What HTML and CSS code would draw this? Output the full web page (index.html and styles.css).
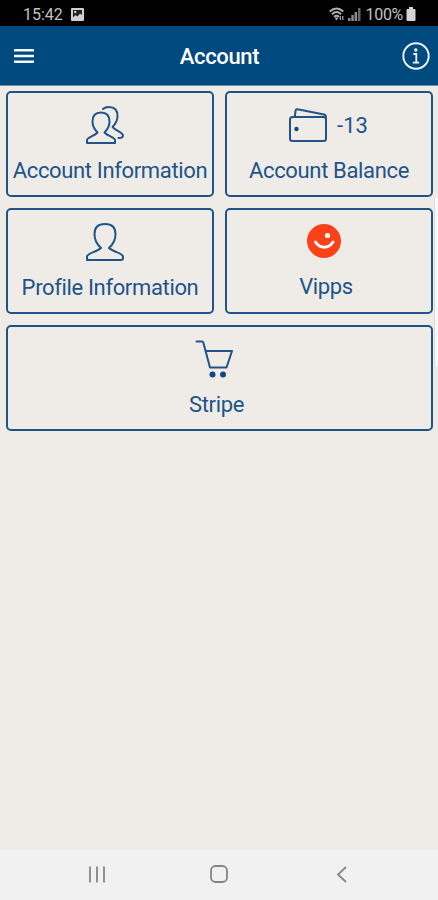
FILE: index.html
```html
<!DOCTYPE html>
<html lang="en">
<head>
<meta charset="utf-8">
<title>Account</title>
<link rel="stylesheet" href="styles.css">
</head>
<body>
<div class="phone">
  <div class="status">
    <span class="time">15:42</span>
    <svg class="photo" width="13" height="13" viewBox="0 0 13 13"><rect width="13" height="13" rx="1" fill="#d0d0d0"/><path d="M2 2h9v5L9 5.500 6.500 8.500 4.500 7 2 9.500z" fill="#222"/><circle cx="4.200" cy="4" r="1.200" fill="#d0d0d0"/></svg>
    <svg class="wifi" width="16" height="15" viewBox="0 0 16 15" fill="none" stroke="#b0b0b0" stroke-width="1.900"><path d="M.7 4.500Q7.500-1.500 14.300 4.500M2.900 7.200Q7.500 3 12.100 7.200M5 9.700Q7.500 7.600 10 9.700"/><path d="M7.500 13.500l-2-3h4z" fill="#b0b0b0" stroke="none"/><path d="M11.300 9v4M13.800 9v4" stroke-width="1.200"/></svg>
    <svg class="signal" width="13" height="13" viewBox="0 0 13 13" fill="#8c8c8c"><path d="M0 10h2.500v3H0zM3.300 7h2.500v6H3.300zM6.600 4h2.500v9H6.600z"/><path d="M10 0h2.500v13H10z" fill="#666"/></svg>
    <span class="percent">100%</span>
    <svg class="battery" width="10" height="14" viewBox="0 0 10 14" fill="#d4d4d4"><path d="M3 0h4v2h1.500q1 0 1 1v10q0 1-1 1h-7q-1 0-1-1V3q0-1 1-1H3z"/></svg>
  </div>
  <header class="bar">
    <svg width="20" height="14" viewBox="0 0 20 14" fill="#f2f6fa"><path d="M0 0h20v2.600H0zM0 5.700h20v2.600H0zM0 11.400h20V14H0z"/></svg>
    <h1 class="title">Account</h1>
    <svg width="28" height="28" viewBox="0 0 28 28" fill="none" stroke="#eef5fb"><circle cx="14" cy="14" r="12.700" stroke-width="1.900"/><circle cx="13.800" cy="8" r="1.700" fill="#eef5fb" stroke="none"/><path d="M11.300 12h3v8.500M10.800 20.700h6.400" stroke-width="1.800"/></svg>
  </header>
  <main class="tiles">
    <section class="tile">
      <div class="icon shifted"><svg width="38" height="38" viewBox="0 0 38 38"><path d="M1 37v-3c0-2.500 7.500-4 10.500-7.500C8.500 23.500 6.500 20 6.500 15.500 6.500 10 9.500 6.500 15 6.500s8.500 3.500 8.500 9c0 4.500-2 8-5 11 3 3.500 10.500 5 10.500 7.500v3z"/><path d="M17 3C18.500 1.500 20.500 1 23 1c5.500 0 8.500 3.500 8.500 9 0 4.500-2 8-5 11 2.500 3.500 10.500 5 10.500 8.500 0 2-1.500 2.500-4.500 2.500"/></svg></div>
      <span class="label">Account Information</span>
    </section>
    <section class="tile">
      <div class="icon balance"><svg width="38" height="34" viewBox="0 0 38 34"><rect x="1" y="9" width="36" height="24" rx="2.500"/><path d="M5.800 8.500l.8-6c.2-1 .8-1.500 1.900-1.300L35 6.500c1.500.4 2 1 2 3"/><circle class="solid" cx="7.500" cy="21" r="2.200"/></svg><span class="amount">-13</span></div>
      <span class="label">Account Balance</span>
    </section>
    <section class="tile">
      <div class="icon shifted"><svg width="38" height="38" viewBox="0 0 38 38"><path d="M1 37v-3.500c0-3.500 10-4.500 14-8.500C11 21.500 8.500 17.500 8.500 11 8.500 4.500 12.500 1 19 1s10.500 3.500 10.500 10c0 6.500-2.500 10.500-6.500 14C27 29 37 30 37 33.500V35q0 2-2 2z"/></svg></div>
      <span class="label">Profile Information</span>
    </section>
    <section class="tile vipps">
      <div class="icon shifted"><svg width="34" height="34" viewBox="0 0 34 34"><circle class="face" cx="17" cy="17" r="17"/><path class="smile" d="M8.500 18c4.500 7 13 7 17.500 0"/><circle class="eye" cx="20.500" cy="11.500" r="2.600"/></svg></div>
      <span class="label short">Vipps</span>
    </section>
    <section class="tile wide">
      <div class="icon shifted"><svg width="38" height="38" viewBox="0 0 38 38"><path d="M1.500 1.500H7q1 0 1.300 1l6.700 25h16.500L37 11H10.500"/><circle class="solid" cx="17.500" cy="34.500" r="3"/><circle class="solid" cx="28" cy="34.500" r="3"/></svg></div>
      <span class="label short">Stripe</span>
    </section>
  </main>
  <div class="edge"></div>
  <nav class="nav">
    <svg width="16" height="17" viewBox="0 0 16 17"><path d="M1 .5v16M8 .5v16M15 .5v16"/></svg>
    <svg class="home" width="18" height="18" viewBox="0 0 18 18"><rect x="1" y="1" width="16" height="16" rx="4.500"/></svg>
    <svg width="11" height="17" viewBox="0 0 11 17"><path d="M10 1L2 8.500 10 16"/></svg>
  </nav>
</div>
</body>
</html>
```

FILE: styles.css
```css
* { box-sizing: border-box; }
body { margin: 0; font-family: Roboto, sans-serif; }
svg { display: block; flex: none; }
.phone {
  position: relative;
  display: flex;
  flex-direction: column;
  width: 438px;
  height: 900px;
  background: #efece7;
  overflow: hidden;
}
.status {
  display: flex;
  align-items: center;
  height: 26px;
  padding: 2px 22px 0 23px;
  background: #000;
  color: #c2c2c2;
  font-size: 16px;
}
.photo { margin-left: 8px; }
.wifi { margin-left: auto; margin-right: 3px; }
.percent { margin: 0 3px 0 4px; letter-spacing: -0.3px; }
.wifi, .signal { position: relative; left: -1px; }
.bar {
  display: flex;
  align-items: center;
  justify-content: space-between;
  height: 60px;
  padding: 0 8px 0 14px;
  background: #004a80;
  border-bottom: 1px solid #668fae;
  color: #fff;
}
.title {
  margin: 3px 0 0 3px;
  font-size: 22px;
  font-weight: 500;
  line-height: 26px;
  letter-spacing: -0.35px;
}
.tiles {
  flex: 1;
  display: grid;
  grid-template-columns: 208px 208px;
  grid-auto-rows: 106px;
  align-content: start;
  gap: 11px;
  padding: 5px 5px 0 6px;
}
.tile {
  display: flex;
  flex-direction: column;
  align-items: center;
  padding-top: 12px;
  border: 2px solid #205489;
  border-radius: 5px;
  color: #205489;
}
.wide { grid-column: span 2; }
.icon {
  display: flex;
  align-items: center;
  height: 39px;
}
.shifted { padding-right: 11px; }
.balance { padding-right: 1px; }
.icon svg {
  fill: none;
  stroke: #205489;
  stroke-width: 2;
  stroke-linejoin: round;
  stroke-linecap: round;
}
.icon .solid { fill: #104a82; stroke: none; }
.icon .face { fill: #fc4118; stroke: none; }
.icon .smile { stroke: #fff; stroke-width: 3; }
.icon .eye { fill: #fff; stroke: none; }
.amount { margin: 2px 0 0 10px; font-size: 22px; }
.label {
  margin-top: 14px;
  font-size: 22px;
  line-height: 26px;
  letter-spacing: -0.35px;
  white-space: nowrap;
}
.short { padding-right: 6px; }
.vipps { padding-top: 11px; }
.edge {
  position: absolute;
  top: 196px;
  right: 0;
  width: 4px;
  height: 172px;
  background: #f8f8f6;
  border-left: 1px solid #dedcd9;
  border-radius: 4px 0 0 4px;
}
.nav {
  display: flex;
  align-items: center;
  justify-content: space-between;
  height: 50px;
  padding: 0 91px 2px 89px;
  background: #f1f1f1;
}
.nav svg { fill: none; stroke: #858585; stroke-width: 1.8; }
.nav .home { margin-right: 3px; }
```
